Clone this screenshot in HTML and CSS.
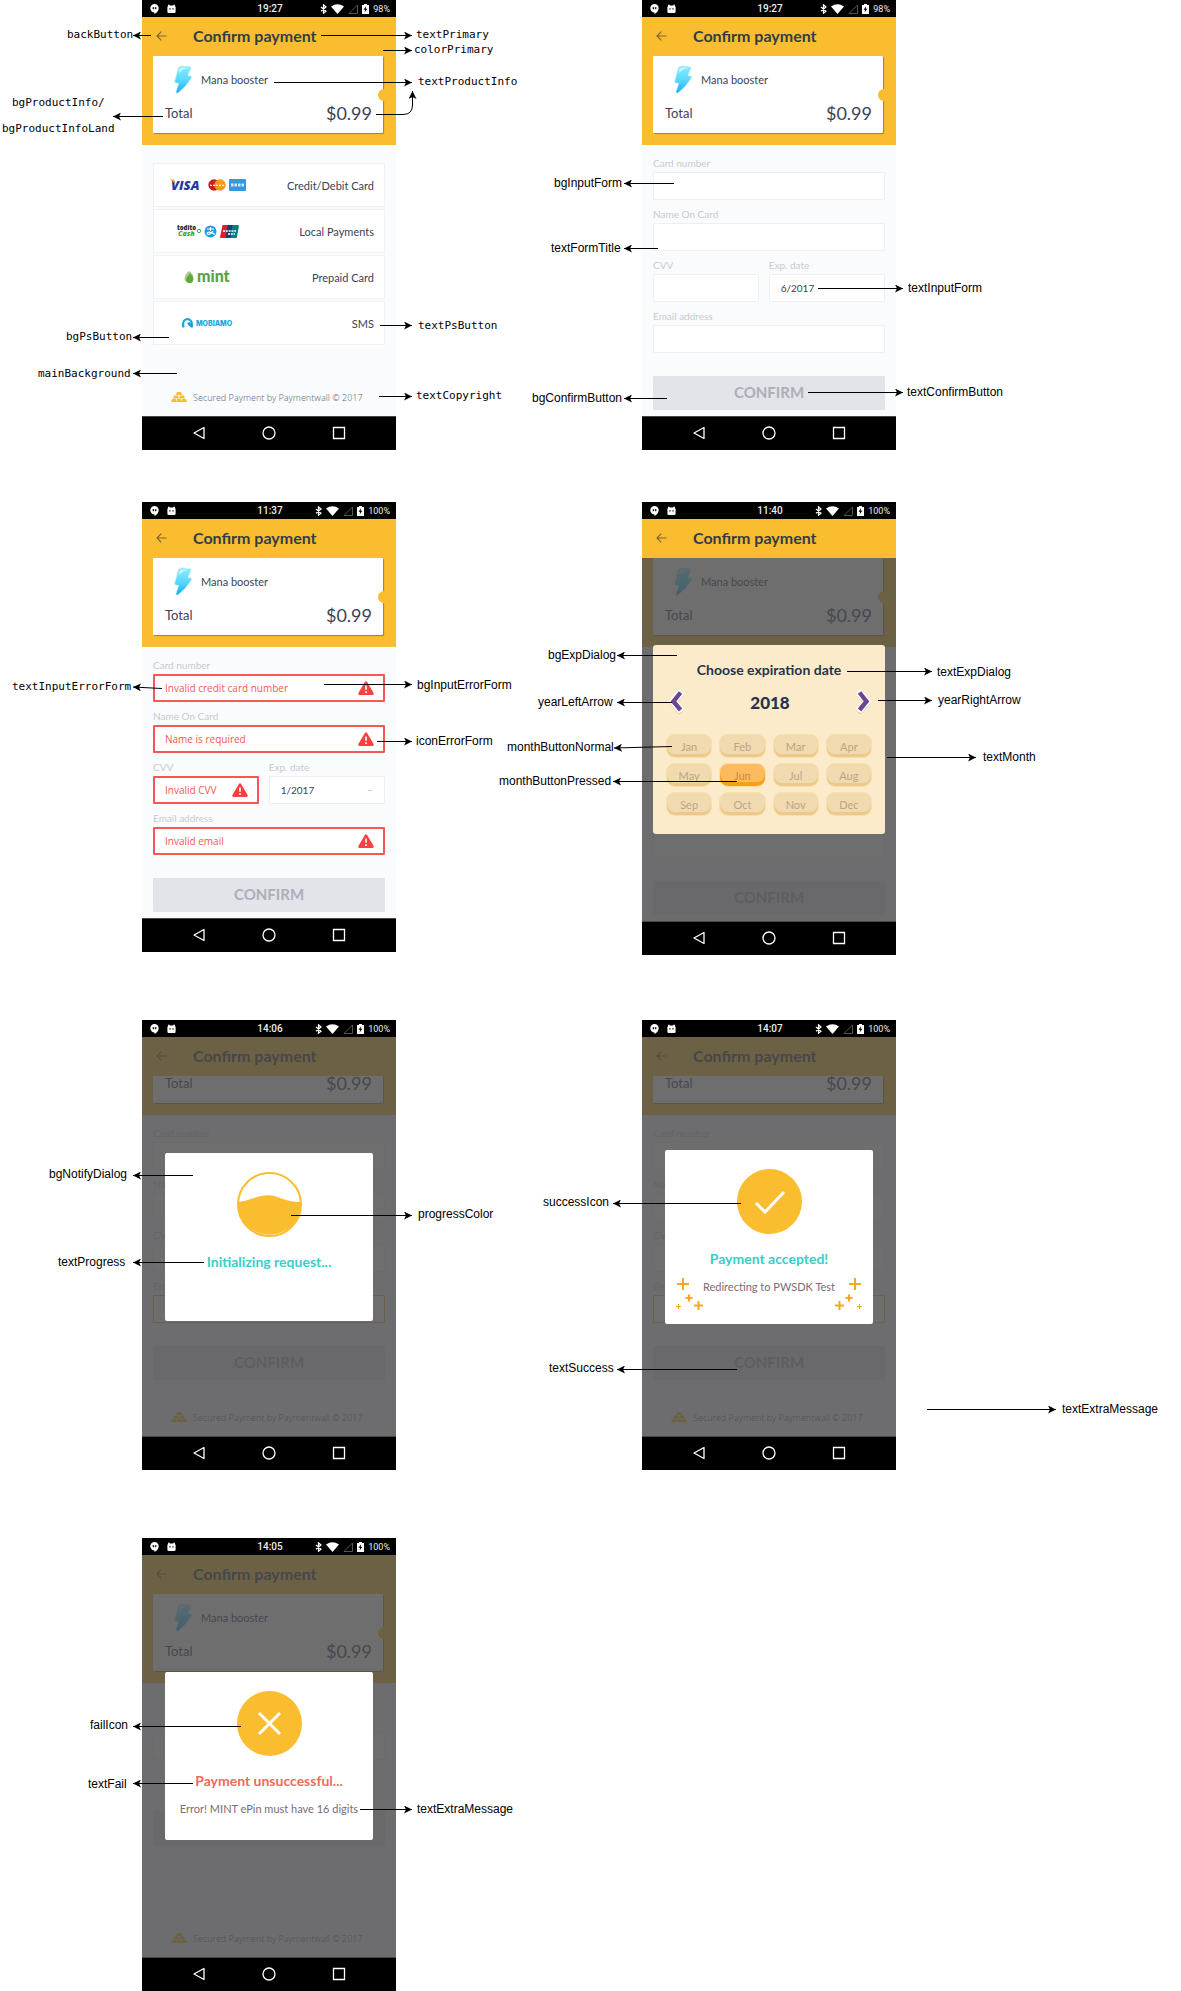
FILE: index.html
```html
<!DOCTYPE html>
<html lang="en">
<head>
<meta charset="utf-8">
<title>Payment SDK theme attributes</title>
<link rel="stylesheet" href="styles.css">
</head>
<body>
<svg class="sprite" aria-hidden="true">
  <defs>
    <marker id="tip" viewBox="0 0 8 8" refX="8" refY="4" markerWidth="8" markerHeight="8" markerUnits="userSpaceOnUse" orient="auto"><path d="M0 0L8 4L0 8L2 4Z"/></marker>
    <linearGradient id="ice" x1="0" y1="0" x2="0" y2="1"><stop offset="0" stop-color="#8eecff"/><stop offset=".55" stop-color="#56d6fb"/><stop offset="1" stop-color="#17a9f3"/></linearGradient>
  </defs>
  <symbol id="hangouts" viewBox="0 0 9 10"><path fill="#fff" d="M4.500 0a4.200 4.200 0 0 1 4.200 4.200c0 2.500-2 4.600-4.200 5.800V8.400A4.200 4.200 0 0 1 4.500 0z"/><path d="M2.600 3.200h1.500v1.500l-.8 1v-1h-.7zM4.900 3.200h1.500v1.500l-.8 1v-1h-.7z"/></symbol>
  <symbol id="droid" viewBox="0 0 9 10"><path fill="#fff" d="M1 1.600L1.900.3l1 1.100h3.200l1-1.100.9 1.300v1.200H1zM.4 2.600h8.200v5.200a1.300 1.300 0 0 1-1.300 1.300H1.700A1.300 1.300 0 0 1 .4 7.800z"/><path d="M2.400 4.200h1.200v1.200H2.400zM5.400 4.200h1.200v1.200H5.400z"/></symbol>
  <symbol id="bt" viewBox="0 0 7 10"><path fill="none" stroke="#fff" stroke-width="1.200" d="M1 3l5 4.200-2.500 2V.8L6 3 1 7.200"/></symbol>
  <symbol id="wifi" viewBox="0 0 13 10"><path fill="#fff" d="M0 2.500Q6.500-2 13 2.500L6.500 10z"/></symbol>
  <symbol id="signal" viewBox="0 0 10 10"><path fill="none" stroke="#555" d="M9.500 1v8.500H1z"/></symbol>
  <symbol id="battery" viewBox="0 0 7 10"><path fill="#fff" d="M2 0h3v1h2v9H0V1h2z"/><path d="M4 2.200L1.500 5.800h1.700l-.6 2.700 2.800-3.800H3.700z"/></symbol>
  <symbol id="back" viewBox="0 0 11 10"><path fill="none" stroke="currentColor" stroke-width="1.200" d="M10.500 5H1M5.200.7L1 5l4.200 4.300"/></symbol>
  <symbol id="bolt" viewBox="0 0 18 29"><path fill="url(#ice)" stroke="#dff3fa" stroke-width=".7" d="M4 3Q5 1 8 .8L16 1.500Q17.500 2 17 3.500L14 10.500L17 11Q18.300 11.500 17.500 13Q12 22 4 28Q1.500 29 2 26.500L4.500 18.500L1.500 18Q.4 17.500.7 16Z"/><path fill="#c6f7ff" d="M5.500 3.500Q9 1.800 14.500 3L9 4.500 5 8z"/></symbol>
  <symbol id="warn" viewBox="0 0 16 14"><path fill="#fa4040" d="M7 .8Q8-.5 9 .8L15.600 12Q16 13.800 14.500 14H1.500Q0 13.800.4 12z"/><path stroke="#fff" stroke-width="1.600" d="M8 4.500v4.200M8 10.200v1.700"/></symbol>
  <symbol id="gold" viewBox="0 0 16 10"><path fill="#fabd2f" d="M6 0h4l1 3H5zM3 3.500h4l1 3H2zM9 3.500h4l1 3H8zM1 7h3.800l.7 3H0zM6 7h4l.7 3H5.300zM11.200 7H15l1 3h-5.500z"/></symbol>
  <symbol id="nav-back" viewBox="0 0 14 14"><path fill="none" stroke="#fff" stroke-width="1.300" stroke-linejoin="round" d="M12 1.500v11L2 7z"/></symbol>
  <symbol id="nav-home" viewBox="0 0 14 14"><circle cx="7" cy="7" r="6" fill="none" stroke="#fff" stroke-width="1.300"/></symbol>
  <symbol id="nav-apps" viewBox="0 0 14 14"><path fill="none" stroke="#fff" stroke-width="1.300" d="M1.500 1.500h11v11h-11z"/></symbol>
  <symbol id="chevron" viewBox="0 0 16 24"><path fill="none" stroke="#cdbb9c" stroke-width="7" stroke-linejoin="round" stroke-linecap="round" d="M11.500 5L5 12.500 11.500 20"/><path fill="none" stroke="#fff" stroke-width="7.500" stroke-linejoin="round" stroke-linecap="round" d="M11.500 4L5 11.500 11.500 19"/><path fill="none" stroke="#6d4690" stroke-width="4.400" d="M12.500 2.500L5.500 11.500 12.500 20"/></symbol>
  <symbol id="sparkles" viewBox="0 0 27 32"><path fill="none" stroke="#f7a823" stroke-width="2" d="M7 0v12M1 6h12M13 16.500v7M9.500 20h7M22.500 23v9M18 27.500h9"/><path fill="none" stroke="#f7a823" d="M2.500 26v5M0 28.500h5"/></symbol>
</svg>

<main class="board">

  <figure class="screen">
    <div class="phone">
      <div class="status">
        <div class="status__left"><svg width="9" height="10"><use href="#hangouts"/></svg><svg width="9" height="10"><use href="#droid"/></svg></div>
        <time>19:27</time>
        <div class="status__right"><svg width="7" height="10"><use href="#bt"/></svg><svg width="13" height="10"><use href="#wifi"/></svg><svg width="10" height="10"><use href="#signal"/></svg><svg width="7" height="10"><use href="#battery"/></svg><span>98%</span></div>
      </div>
      <div class="view">
        <header class="appbar"><button class="appbar__back" aria-label="Back"><svg width="11" height="10"><use href="#back"/></svg></button><h2>Confirm payment</h2></header>
        <div class="content">
          <section class="hero"><div class="card"><div class="card__product"><svg width="18" height="29"><use href="#bolt"/></svg><span>Mana booster</span></div><div class="card__total"><span>Total</span><strong>$0.99</strong></div></div></section>
          <div class="methods">
            <button class="method"><span class="method__logos">
              <svg width="35" height="14" viewBox="0 0 35 14"><text class="logo-visa" x="1" y="12">VISA</text><path fill="#f3a01c" d="M0 1.500h4l1.500 4z"/></svg>
              <svg width="18" height="12" viewBox="0 0 18 12"><circle cx="6" cy="6" r="5.700" fill="#cc1f1f"/><circle cx="12" cy="6" r="5.700" fill="#f59a1b"/><path stroke="#fff" stroke-width="1.300" stroke-dasharray="2 1" d="M2 6.300h14"/></svg>
              <svg width="17" height="12" viewBox="0 0 17 12"><rect width="17" height="12" rx="1" fill="#3598db"/><path stroke="#d6ebf9" stroke-width="3" stroke-dasharray="2.500 1" d="M2 6h13"/></svg>
            </span><span>Credit/Debit Card</span></button>
            <button class="method"><span class="method__logos">
              <svg width="24" height="14" viewBox="0 0 24 14"><text class="logo-todito" x="0" y="6">todito</text><text class="logo-cash" x="1" y="12">Cash</text><circle cx="22" cy="7" r="1.700" fill="none" stroke="#3db54a"/></svg>
              <svg width="13" height="13" viewBox="0 0 13 13"><circle cx="6.500" cy="6.500" r="6" fill="#1d9fe6"/><path fill="none" stroke="#fff" stroke-width="1.200" d="M3 4h7M6.500 2v4M9 6Q7 9.500 4 9.500 2 8 4.500 7.200 7 7 11 9.500"/></svg>
              <svg width="19" height="13" viewBox="0 0 19 13"><path fill="#d8232f" d="M2.500 0H9L7 13H1Q0 13 0 12z"/><path fill="#17406f" d="M7.500 0h6l-2 13h-6z"/><path fill="#0a7c84" d="M12.500 0H18q1 0 .9 1L17 12q-.2 1-1 1h-5.500z"/><path stroke="#fff" stroke-width="1.500" stroke-dasharray="2 .8" d="M3 6h13M8 9h7"/></svg>
            </span><span>Local Payments</span></button>
            <button class="method"><span class="method__logos">
              <svg width="10" height="12" viewBox="0 0 10 12"><path fill="#a9d08c" d="M5 0Q10 3 9.500 8T5 12Q0 11 .5 7T5 0z"/><path fill="#5fa83c" d="M6 2Q10 6 9 9.500T5 12Q1 11 2.500 7z"/></svg>
              <svg width="36" height="14" viewBox="0 0 36 14"><text class="logo-mint" x="0" y="12">mint</text></svg>
            </span><span>Prepaid Card</span></button>
            <button class="method"><span class="method__logos">
              <svg width="11" height="10" viewBox="0 0 11 10"><path fill="none" stroke="#15a5de" stroke-width="2.200" d="M1.200 9.500V5.500A4.300 4.300 0 0 1 9.800 5.500V9.500"/><path fill="#15a5de" d="M5 5l3-1 2 3v2.500L7 8z"/></svg>
              <svg width="38" height="10" viewBox="0 0 38 10"><text class="logo-mobiamo" x="0" y="8">MOBIAMO</text></svg>
            </span><span>SMS</span></button>
          </div>
          <footer class="copyright"><svg width="16" height="10"><use href="#gold"/></svg><small>Secured Payment by Paymentwall © 2017</small></footer>
        </div>
      </div>
      <nav class="nav"><button aria-label="Back"><svg width="14" height="14"><use href="#nav-back"/></svg></button><button aria-label="Home"><svg width="14" height="14"><use href="#nav-home"/></svg></button><button aria-label="Recent apps"><svg width="14" height="14"><use href="#nav-apps"/></svg></button></nav>
    </div>
    <svg class="notes" viewBox="142 0 254 450">
      <path d="M151 35.500H133"/><text class="mono" x="67" y="38">backButton</text>
      <path d="M321 35.500H412"/><text class="mono" x="416" y="38">textPrimary</text>
      <path d="M383 50.500H412"/><text class="mono" x="414" y="53">colorPrimary</text>
      <path d="M274 82.500H412"/><text class="mono" x="418" y="85">textProductInfo</text>
      <path d="M376 114.500H403Q412.500 114.500 412.500 105V91"/>
      <path d="M163 116.500H113"/><text class="mono" x="12" y="106">bgProductInfo/</text><text class="mono" x="2" y="132">bgProductInfoLand</text>
      <path d="M380 325.500H412"/><text class="mono" x="418" y="329">textPsButton</text>
      <path d="M169 337.500H133"/><text class="mono" x="66" y="340">bgPsButton</text>
      <path d="M177 373.500H133"/><text class="mono" x="38" y="377">mainBackground</text>
      <path d="M379 396.500H412"/><text class="mono" x="416" y="399">textCopyright</text>
    </svg>
  </figure>

  <figure class="screen">
    <div class="phone">
      <div class="status">
        <div class="status__left"><svg width="9" height="10"><use href="#hangouts"/></svg><svg width="9" height="10"><use href="#droid"/></svg></div>
        <time>19:27</time>
        <div class="status__right"><svg width="7" height="10"><use href="#bt"/></svg><svg width="13" height="10"><use href="#wifi"/></svg><svg width="10" height="10"><use href="#signal"/></svg><svg width="7" height="10"><use href="#battery"/></svg><span>98%</span></div>
      </div>
      <div class="view">
        <header class="appbar"><button class="appbar__back" aria-label="Back"><svg width="11" height="10"><use href="#back"/></svg></button><h2>Confirm payment</h2></header>
        <div class="content">
          <section class="hero"><div class="card"><div class="card__product"><svg width="18" height="29"><use href="#bolt"/></svg><span>Mana booster</span></div><div class="card__total"><span>Total</span><strong>$0.99</strong></div></div></section>
          <form class="form">
            <label class="field"><span>Card number</span><input type="text"></label>
            <label class="field"><span>Name On Card</span><input type="text"></label>
            <div class="form__pair">
              <label class="field"><span>CVV</span><input type="text"></label>
              <label class="field"><span>Exp. date</span><select><option>6/2017</option></select></label>
            </div>
            <label class="field"><span>Email address</span><input type="email"></label>
            <button class="confirm" type="button">CONFIRM</button>
          </form>
        </div>
      </div>
      <nav class="nav"><button aria-label="Back"><svg width="14" height="14"><use href="#nav-back"/></svg></button><button aria-label="Home"><svg width="14" height="14"><use href="#nav-home"/></svg></button><button aria-label="Recent apps"><svg width="14" height="14"><use href="#nav-apps"/></svg></button></nav>
    </div>
    <svg class="notes" viewBox="642 0 254 450">
      <path d="M674 183.500H624"/><text x="554" y="187">bgInputForm</text>
      <path d="M658 248.500H624"/><text x="551" y="252">textFormTitle</text>
      <path d="M818 288.500H903"/><text x="908" y="292">textInputForm</text>
      <path d="M808 392.500H903"/><text x="907" y="396">textConfirmButton</text>
      <path d="M667 398.500H624"/><text x="532" y="402">bgConfirmButton</text>
    </svg>
  </figure>

  <figure class="screen">
    <div class="phone">
      <div class="status">
        <div class="status__left"><svg width="9" height="10"><use href="#hangouts"/></svg><svg width="9" height="10"><use href="#droid"/></svg></div>
        <time>11:37</time>
        <div class="status__right"><svg width="7" height="10"><use href="#bt"/></svg><svg width="13" height="10"><use href="#wifi"/></svg><svg width="10" height="10"><use href="#signal"/></svg><svg width="7" height="10"><use href="#battery"/></svg><span>100%</span></div>
      </div>
      <div class="view">
        <header class="appbar"><button class="appbar__back" aria-label="Back"><svg width="11" height="10"><use href="#back"/></svg></button><h2>Confirm payment</h2></header>
        <div class="content">
          <section class="hero"><div class="card"><div class="card__product"><svg width="18" height="29"><use href="#bolt"/></svg><span>Mana booster</span></div><div class="card__total"><span>Total</span><strong>$0.99</strong></div></div></section>
          <form class="form">
            <label class="field field--error"><span>Card number</span><input type="text" value="Invalid credit card number"><svg width="16" height="14"><use href="#warn"/></svg></label>
            <label class="field field--error"><span>Name On Card</span><input type="text" value="Name is required"><svg width="16" height="14"><use href="#warn"/></svg></label>
            <div class="form__pair">
              <label class="field field--error"><span>CVV</span><input type="text" value="Invalid CVV"><svg width="16" height="14"><use href="#warn"/></svg></label>
              <label class="field"><span>Exp. date</span><select><option>1/2017</option></select></label>
            </div>
            <label class="field field--error"><span>Email address</span><input type="text" value="Invalid email"><svg width="16" height="14"><use href="#warn"/></svg></label>
            <button class="confirm" type="button">CONFIRM</button>
          </form>
        </div>
      </div>
      <nav class="nav"><button aria-label="Back"><svg width="14" height="14"><use href="#nav-back"/></svg></button><button aria-label="Home"><svg width="14" height="14"><use href="#nav-home"/></svg></button><button aria-label="Recent apps"><svg width="14" height="14"><use href="#nav-apps"/></svg></button></nav>
    </div>
    <svg class="notes" viewBox="142 502 254 450">
      <path d="M162 688.500L133 687"/><text class="mono" x="12" y="690">textInputErrorForm</text>
      <path d="M324 684.500H412"/><text x="417" y="689">bgInputErrorForm</text>
      <path d="M377 741.500H412"/><text x="416" y="745">iconErrorForm</text>
    </svg>
  </figure>

  <figure class="screen">
    <div class="phone phone--tall">
      <div class="status">
        <div class="status__left"><svg width="9" height="10"><use href="#hangouts"/></svg><svg width="9" height="10"><use href="#droid"/></svg></div>
        <time>11:40</time>
        <div class="status__right"><svg width="7" height="10"><use href="#bt"/></svg><svg width="13" height="10"><use href="#wifi"/></svg><svg width="10" height="10"><use href="#signal"/></svg><svg width="7" height="10"><use href="#battery"/></svg><span>100%</span></div>
      </div>
      <div class="view">
        <header class="appbar"><button class="appbar__back" aria-label="Back"><svg width="11" height="10"><use href="#back"/></svg></button><h2>Confirm payment</h2></header>
        <div class="content">
          <section class="hero"><div class="card"><div class="card__product"><svg width="18" height="29"><use href="#bolt"/></svg><span>Mana booster</span></div><div class="card__total"><span>Total</span><strong>$0.99</strong></div></div></section>
          <form class="form form--covered">
            <input type="email" aria-label="Email address">
            <button class="confirm" type="button">CONFIRM</button>
          </form>
          <div class="overlay">
            <div class="picker" role="dialog" aria-label="Choose expiration date">
              <h3>Choose expiration date</h3>
              <div class="picker__year">
                <button aria-label="Previous year"><svg width="16" height="24"><use href="#chevron"/></svg></button>
                <output>2018</output>
                <button class="picker__next" aria-label="Next year"><svg width="16" height="24"><use href="#chevron"/></svg></button>
              </div>
              <div class="picker__months">
                <button>Jan</button><button>Feb</button><button>Mar</button><button>Apr</button>
                <button>May</button><button class="is-pressed">Jun</button><button>Jul</button><button>Aug</button>
                <button>Sep</button><button>Oct</button><button>Nov</button><button>Dec</button>
              </div>
            </div>
          </div>
        </div>
      </div>
      <nav class="nav"><button aria-label="Back"><svg width="14" height="14"><use href="#nav-back"/></svg></button><button aria-label="Home"><svg width="14" height="14"><use href="#nav-home"/></svg></button><button aria-label="Recent apps"><svg width="14" height="14"><use href="#nav-apps"/></svg></button></nav>
    </div>
    <svg class="notes" viewBox="642 502 254 450">
      <path d="M677 655.500H617"/><text x="548" y="659">bgExpDialog</text>
      <path d="M847 671.500H932"/><text x="937" y="676">textExpDialog</text>
      <path d="M672 702.500H617"/><text x="538" y="706">yearLeftArrow</text>
      <path d="M878 700.500H932"/><text x="938" y="704">yearRightArrow</text>
      <path d="M672 746.500L614 748"/><text x="507" y="751">monthButtonNormal</text>
      <path d="M737 781.500H613"/><text x="499" y="785">monthButtonPressed</text>
      <path d="M887 757.500H976"/><text x="983" y="761">textMonth</text>
    </svg>
  </figure>

  <figure class="screen">
    <div class="phone">
      <div class="status">
        <div class="status__left"><svg width="9" height="10"><use href="#hangouts"/></svg><svg width="9" height="10"><use href="#droid"/></svg></div>
        <time>14:06</time>
        <div class="status__right"><svg width="7" height="10"><use href="#bt"/></svg><svg width="13" height="10"><use href="#wifi"/></svg><svg width="10" height="10"><use href="#signal"/></svg><svg width="7" height="10"><use href="#battery"/></svg><span>100%</span></div>
      </div>
      <div class="view">
        <header class="appbar"><button class="appbar__back" aria-label="Back"><svg width="11" height="10"><use href="#back"/></svg></button><h2>Confirm payment</h2></header>
        <div class="content content--scrolled">
          <section class="hero"><div class="card"><div class="card__product"></div><div class="card__total"><span>Total</span><strong>$0.99</strong></div></div></section>
          <form class="form">
            <label class="field"><span>Card number</span><input type="text"></label>
            <label class="field"><span>Name On Card</span><input type="text"></label>
            <div class="form__pair">
              <label class="field"><span>CVV</span><input type="text"></label>
              <label class="field"><span>Exp. date</span><select><option></option></select></label>
            </div>
            <label class="field field--focus"><span>Email address</span><input type="email"></label>
            <button class="confirm" type="button">CONFIRM</button>
          </form>
          <footer class="copyright"><svg width="16" height="10"><use href="#gold"/></svg><small>Secured Payment by Paymentwall © 2017</small></footer>
        </div>
        <div class="overlay">
          <div class="notify" role="dialog">
            <svg width="65" height="65" viewBox="0 0 65 65"><circle cx="32.500" cy="32.500" r="31.500" fill="none" stroke="#fabd2f" stroke-width="2"/><path fill="#fabd2f" d="M1 30Q9 29 17 26Q30 21 42 25.500Q53 30 64 30A31.500 31.500 0 0 1 1 32.500z"/></svg>
            <p class="notify__title">Initializing request...</p>
          </div>
        </div>
      </div>
      <nav class="nav"><button aria-label="Back"><svg width="14" height="14"><use href="#nav-back"/></svg></button><button aria-label="Home"><svg width="14" height="14"><use href="#nav-home"/></svg></button><button aria-label="Recent apps"><svg width="14" height="14"><use href="#nav-apps"/></svg></button></nav>
    </div>
    <svg class="notes" viewBox="142 1020 254 450">
      <path d="M193 1175.500H133"/><text x="49" y="1178">bgNotifyDialog</text>
      <path d="M204 1262.500H133"/><text x="58" y="1266">textProgress</text>
      <path d="M291 1215.500H412"/><text x="418" y="1218">progressColor</text>
    </svg>
  </figure>

  <figure class="screen">
    <div class="phone">
      <div class="status">
        <div class="status__left"><svg width="9" height="10"><use href="#hangouts"/></svg><svg width="9" height="10"><use href="#droid"/></svg></div>
        <time>14:07</time>
        <div class="status__right"><svg width="7" height="10"><use href="#bt"/></svg><svg width="13" height="10"><use href="#wifi"/></svg><svg width="10" height="10"><use href="#signal"/></svg><svg width="7" height="10"><use href="#battery"/></svg><span>100%</span></div>
      </div>
      <div class="view">
        <header class="appbar"><button class="appbar__back" aria-label="Back"><svg width="11" height="10"><use href="#back"/></svg></button><h2>Confirm payment</h2></header>
        <div class="content content--scrolled">
          <section class="hero"><div class="card"><div class="card__product"></div><div class="card__total"><span>Total</span><strong>$0.99</strong></div></div></section>
          <form class="form">
            <label class="field"><span>Card number</span><input type="text"></label>
            <label class="field"><span>Name On Card</span><input type="text"></label>
            <div class="form__pair">
              <label class="field"><span>CVV</span><input type="text"></label>
              <label class="field"><span>Exp. date</span><select><option></option></select></label>
            </div>
            <label class="field field--focus"><span>Email address</span><input type="email"></label>
            <button class="confirm" type="button">CONFIRM</button>
          </form>
          <footer class="copyright"><svg width="16" height="10"><use href="#gold"/></svg><small>Secured Payment by Paymentwall © 2017</small></footer>
        </div>
        <div class="overlay">
          <div class="notify notify--success" role="dialog">
            <svg width="65" height="65" viewBox="0 0 65 65"><circle cx="32.500" cy="32.500" r="32.500" fill="#fabd2f"/><path fill="none" stroke="#fff" stroke-width="3" d="M19 34L28 43L47 23"/></svg>
            <p class="notify__title">Payment accepted!</p>
            <p class="notify__extra">Redirecting to PWSDK Test</p>
            <svg class="notify__spark" width="27" height="32"><use href="#sparkles"/></svg>
            <svg class="notify__spark notify__spark--right" width="27" height="32"><use href="#sparkles"/></svg>
          </div>
        </div>
      </div>
      <nav class="nav"><button aria-label="Back"><svg width="14" height="14"><use href="#nav-back"/></svg></button><button aria-label="Home"><svg width="14" height="14"><use href="#nav-home"/></svg></button><button aria-label="Recent apps"><svg width="14" height="14"><use href="#nav-apps"/></svg></button></nav>
    </div>
    <svg class="notes" viewBox="642 1020 254 450">
      <path d="M741 1203.500H613"/><text x="543" y="1206">successIcon</text>
      <path d="M737 1369.500H617"/><text x="549" y="1372">textSuccess</text>
      <path d="M927 1409.500H1056"/><text x="1062" y="1413">textExtraMessage</text>
    </svg>
  </figure>

  <figure class="screen">
    <div class="phone phone--tall">
      <div class="status">
        <div class="status__left"><svg width="9" height="10"><use href="#hangouts"/></svg><svg width="9" height="10"><use href="#droid"/></svg></div>
        <time>14:05</time>
        <div class="status__right"><svg width="7" height="10"><use href="#bt"/></svg><svg width="13" height="10"><use href="#wifi"/></svg><svg width="10" height="10"><use href="#signal"/></svg><svg width="7" height="10"><use href="#battery"/></svg><span>100%</span></div>
      </div>
      <div class="view">
        <header class="appbar"><button class="appbar__back" aria-label="Back"><svg width="11" height="10"><use href="#back"/></svg></button><h2>Confirm payment</h2></header>
        <div class="content">
          <section class="hero"><div class="card"><div class="card__product"><svg width="18" height="29"><use href="#bolt"/></svg><span>Mana booster</span></div><div class="card__total"><span>Total</span><strong>$0.99</strong></div></div></section>
          <form class="form form--pin">
            <input type="text" aria-label="ePin">
            <button class="confirm" type="button" aria-label="Confirm"></button>
          </form>
          <footer class="copyright"><svg width="16" height="10"><use href="#gold"/></svg><small>Secured Payment by Paymentwall © 2017</small></footer>
        </div>
        <div class="overlay">
          <div class="notify notify--fail" role="dialog">
            <svg width="65" height="65" viewBox="0 0 65 65"><circle cx="32.500" cy="32.500" r="32.500" fill="#fabd2f"/><path fill="none" stroke="#fff" stroke-width="3" d="M22 22L43 43M43 22L22 43"/></svg>
            <p class="notify__title">Payment unsuccessful...</p>
            <p class="notify__extra">Error! MINT ePin must have 16 digits</p>
          </div>
        </div>
      </div>
      <nav class="nav"><button aria-label="Back"><svg width="14" height="14"><use href="#nav-back"/></svg></button><button aria-label="Home"><svg width="14" height="14"><use href="#nav-home"/></svg></button><button aria-label="Recent apps"><svg width="14" height="14"><use href="#nav-apps"/></svg></button></nav>
    </div>
    <svg class="notes" viewBox="142 1538 254 450">
      <path d="M241 1726.500H133"/><text x="90" y="1729">failIcon</text>
      <path d="M193 1783.500H133"/><text x="88" y="1788">textFail</text>
      <path d="M360 1809.500H412"/><text x="417" y="1813">textExtraMessage</text>
    </svg>
  </figure>

</main>
</body>
</html>
```
FILE: styles.css
```css
* { box-sizing: border-box; }

body {
  margin: 0;
  background: #fff;
  font-family: Lato, "Liberation Sans", sans-serif;
  color: #3a4258;
}

button, input, select {
  margin: 0;
  padding: 0;
  border: 0;
  background: none;
  font: inherit;
  color: inherit;
}

h2, h3, p, figure { margin: 0; }
svg { display: block; flex: none; }
.sprite { position: absolute; width: 0; height: 0; }

/* Board of annotated screens */
.board {
  display: grid;
  grid-template-columns: minmax(500px, 42%) 1fr;
  grid-template-rows: 502px 518px 518px auto;
  padding-left: 142px;
}

.screen {
  position: relative;
  width: 254px;
}

.phone {
  display: flex;
  flex-direction: column;
  min-height: 450px;
  background: #fafbfd;
}
.phone--tall { min-height: 453px; }

/* Callouts that lie over the screens */
.notes {
  position: absolute;
  top: 0;
  left: 0;
  width: 254px;
  height: 450px;
  overflow: visible;
  pointer-events: none;
}
.notes path {
  fill: none;
  stroke: #000;
  marker-end: url(#tip);
}
.notes text {
  font: 12px "Liberation Sans", Arial, sans-serif;
  fill: #000;
}
.notes .mono { font: 11px "DejaVu Sans Mono", "Liberation Mono", monospace; }

/* Android status bar */
.status {
  display: grid;
  grid-template-columns: 1fr auto 1fr;
  align-items: center;
  height: 17px;
  padding: 0 6px 0 8px;
  background: #000;
  color: #eee;
  font: 500 10px Roboto, sans-serif;
}
.status__left { display: flex; gap: 8px; }
.status__right {
  display: flex;
  align-items: center;
  justify-content: flex-end;
  gap: 4px;
  font-size: 9px;
  font-weight: 400;
}

.view {
  position: relative;
  flex: 1;
  display: flex;
  flex-direction: column;
}

.appbar {
  display: flex;
  align-items: center;
  height: 39px;
  padding: 0 0 2px 14px;
  gap: 26px;
  background: #fabd2f;
}
.appbar__back { color: #7d6532; }
.appbar h2 {
  font-size: 16px;
  line-height: 20px;
  font-weight: 700;
  color: #333c48;
}

.content {
  position: relative;
  flex: 1;
  display: flex;
  flex-direction: column;
  overflow: hidden;
}

.hero {
  padding: 0 13px 12px 11px;
  background: #fabd2f;
}
.content--scrolled .hero { margin-top: -50px; }

.card {
  position: relative;
  display: flex;
  flex-direction: column;
  gap: 8px;
  padding: 9px 11px 9px 12px;
  background: #fff;
  border-radius: 1px;
  box-shadow: 1px 1px 1px rgba(90, 70, 20, .5);
}
.card::after {
  content: "";
  position: absolute;
  top: 33px;
  right: -7px;
  width: 12px;
  height: 12px;
  border-radius: 50%;
  background: #fabd2f;
}
.card__product {
  display: flex;
  align-items: center;
  gap: 9px;
  height: 29px;
  padding-left: 9px;
  font-size: 11px;
}
.card__total {
  display: flex;
  align-items: center;
  justify-content: space-between;
  font-size: 13px;
  line-height: 22px;
}
.card__total strong { font-size: 18px; font-weight: 400; }

/* Payment systems */
.methods {
  display: grid;
  gap: 2px;
  padding: 18px 11px 0;
}
.method {
  display: flex;
  align-items: center;
  justify-content: space-between;
  height: 44px;
  padding: 0 10px 0 16px;
  border: 1px solid #f0f1f4;
  background: #fff;
  font-size: 11px;
}
.method__logos {
  display: flex;
  align-items: center;
  justify-content: center;
  gap: 3px;
  width: 76px;
}
.logo-visa { font: italic 800 13px "Open Sans", sans-serif; fill: #26399a; }
.logo-todito { font: 800 6px "Open Sans", sans-serif; fill: #222; }
.logo-cash { font: italic 800 7px "Open Sans", sans-serif; fill: #2fae3f; }
.logo-mint { font: 900 16px Lato, sans-serif; fill: #55a244; }
.logo-mobiamo { font: 800 7px Inter, sans-serif; fill: #15a5de; }

.copyright {
  display: flex;
  align-items: center;
  gap: 6px;
  height: 38px;
  margin-top: auto;
  padding-left: 29px;
}
.copyright small {
  font: 300 9px "Noto Sans", sans-serif;
  color: #6a7080;
}

/* Card form */
.form {
  display: flex;
  flex-direction: column;
  gap: 8px;
  padding: 12px 11px 6px;
}
.form__pair {
  display: grid;
  grid-template-columns: 10fr 11fr;
  gap: 10px;
}
.field {
  position: relative;
  display: grid;
  gap: 3px;
}
.field > span {
  font-size: 10px;
  line-height: 12px;
  color: #c8cad2;
}
.form input, .form select {
  width: 100%;
  min-width: 0;
  height: 28px;
  padding: 0 11px;
  border: 1px solid #eeeff3;
  border-radius: 1px;
  background: #fff;
  font-size: 10px;
}
.form select {
  appearance: none;
  background: #fff linear-gradient(#c8cad2, #c8cad2) right 12px center / 4px 1px no-repeat;
}
.form .field--error input {
  padding: 0 10px;
  border: 2px solid #f65656;
  font: 10px "Open Sans", sans-serif;
  color: #f65656;
}
.field--error svg {
  position: absolute;
  right: 11px;
  bottom: 7px;
}
.form .field--focus input { border-color: #fabd2f; }

.confirm {
  height: 34px;
  margin-top: 15px;
  padding-bottom: 2px;
  border-radius: 1px;
  background: #e3e4e9;
  font-size: 15px;
  font-weight: 700;
  color: #abaebb;
}
.form--covered { margin-top: auto; }
.form--pin { padding-top: 49px; }
.form--pin .confirm { margin-top: 43px; }

/* Dialogs */
.overlay {
  position: absolute;
  inset: 0;
  display: flex;
  align-items: center;
  justify-content: center;
  background: rgba(74, 74, 75, .8);
}

.picker {
  width: 232px;
  padding: 15px 13px 18px;
  border-radius: 3px;
  background: #fbebcb;
  color: #2a3248;
}
.picker h3 {
  font-size: 14px;
  line-height: 20px;
  text-align: center;
}
.picker__year {
  display: flex;
  align-items: center;
  justify-content: space-between;
  margin: 10px 0 20px;
  padding-left: 2px;
}
.picker__year output { font-size: 17px; font-weight: 900; }
.picker__next svg { transform: scaleX(-1); }
.picker__months {
  display: grid;
  grid-template-columns: repeat(4, 1fr);
  gap: 5px 7px;
}
.picker__months button {
  height: 24px;
  border: 1px solid #f8dfa6;
  border-radius: 9px;
  background: #f1dab0;
  box-shadow: inset 0 -3px 0 #ecc88a;
  font-size: 11px;
  color: #baa687;
}
.picker__months .is-pressed {
  background: #fdba5e;
  box-shadow: inset 0 -4px 0 #fb9f12;
  color: #c88c42;
}

.notify {
  position: relative;
  display: flex;
  flex-direction: column;
  align-items: center;
  width: 208px;
  min-height: 168px;
  padding: 19px 0 22px;
  border-radius: 2px;
  background: #fff;
}
.notify--success { padding-bottom: 29px; }
.notify__title {
  margin-top: 15px;
  font-size: 14px;
  line-height: 20px;
  font-weight: 700;
  color: #3acdc9;
}
.notify--fail .notify__title { color: #f4685c; }
.notify__extra {
  margin-top: 10px;
  font-size: 11px;
  line-height: 16px;
  color: #7d6b78;
}
.notify__spark {
  position: absolute;
  left: 11px;
  bottom: 14px;
}
.notify__spark--right {
  left: auto;
  right: 11px;
  transform: scaleX(-1);
}

/* Android navigation bar */
.nav {
  display: flex;
  justify-content: center;
  height: 34px;
  padding-bottom: 1px;
  border-top: 1px solid #45474a;
  background: #000;
}
.nav button {
  display: grid;
  place-items: center;
  width: 70px;
}
```
